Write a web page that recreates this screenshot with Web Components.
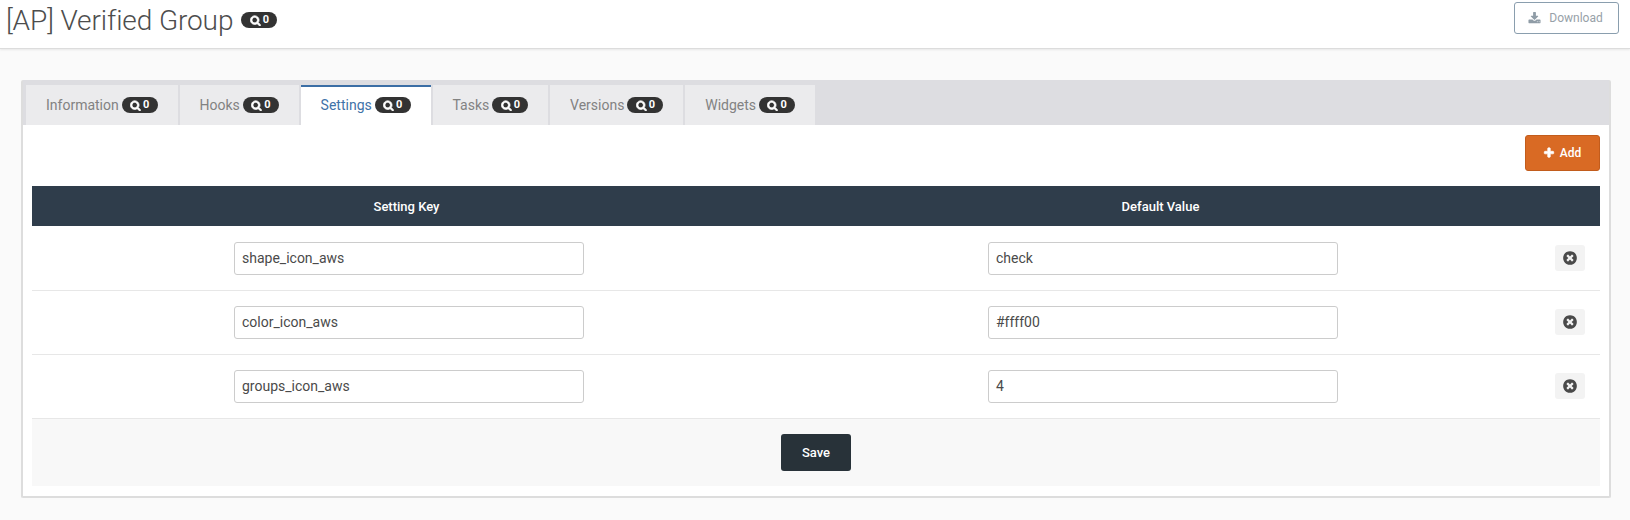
<!DOCTYPE html>
<html>
<head>
<meta charset="utf-8">
<title>[AP] Verified Group</title>
<style>
html, body { margin: 0; padding: 0; background: #fafafa; }
body { font-family: Roboto, "Liberation Sans", sans-serif; width: 1630px; height: 520px; overflow: hidden; }
</style>
</head>
<body>
<page-header heading="[AP] Verified Group"></page-header>
<settings-panel>
  <tab-strip>
    <tab-item>Information</tab-item>
    <tab-item>Hooks</tab-item>
    <tab-item active>Settings</tab-item>
    <tab-item>Tasks</tab-item>
    <tab-item>Versions</tab-item>
    <tab-item>Widgets</tab-item>
  </tab-strip>
  <settings-table>
    <setting-row key="shape_icon_aws" value="check"></setting-row>
    <setting-row key="color_icon_aws" value="#ffff00"></setting-row>
    <setting-row key="groups_icon_aws" value="4"></setting-row>
  </settings-table>
</settings-panel>

<script>
const ICONS = {
  search: "M1216 832q0-185-131.500-316.500t-316.500-131.500-316.500 131.500-131.500 316.500 131.500 316.500 316.500 131.500 316.500-131.500 131.500-316.500zm512 832q0 52-38 90t-90 38q-54 0-90-38l-343-342q-179 124-399 124-143 0-273.500-55.500t-225-150-150-225-55.500-273.500 55.500-273.500 150-225 225-150 273.500-55.500 273.500 55.500 225 150 150 225 55.500 273.500q0 220-124 399l343 343q37 37 37 90z",
  plus: "M1600 736v192q0 40-28 68t-68 28h-416v416q0 40-28 68t-68 28h-192q-40 0-68-28t-28-68v-416h-416q-40 0-68-28t-28-68v-192q0-40 28-68t68-28h416v-416q0-40 28-68t68-28h192q40 0 68 28t28 68v416h416q40 0 68 28t28 68z",
  close: "M1277 1122q0-26-19-45l-181-181 181-181q19-19 19-45 0-27-19-46l-90-90q-19-19-46-19-26 0-45 19l-181 181-181-181q-19-19-45-19-27 0-46 19l-90 90q-19 19-19 46 0 26 19 45l181 181-181 181q-19 19-19 45 0 27 19 46l90 90q19 19 46 19 26 0 45-19l181-181 181 181q19 19 45 19 27 0 46-19l90-90q19-19 19-46zm387-226q0 209-103 385.500t-279.500 279.500-385.500 103-385.500-103-279.500-279.500-103-385.500 103-385.500 279.500-279.500 385.500-103 385.500 103 279.500 279.500 103 385.500z",
  download: "M1344 1344q0-26-19-45t-45-19-45 19-19 45 19 45 45 19 45-19 19-45zm256 0q0-26-19-45t-45-19-45 19-19 45 19 45 45 19 45-19 19-45zm128-224v320q0 40-28 68t-68 28h-1472q-40 0-68-28t-28-68v-320q0-40 28-68t68-28h465l135 136q58 56 136 56t136-56l136-136h464q40 0 68 28t28 68zm-325-569q17 41-14 70l-448 448q-18 19-45 19t-45-19l-448-448q-31-29-14-70 17-39 59-39h256v-448q0-26 19-45t45-19h256q26 0 45 19t19 45v448h256q42 0 59 39z"
};
const icon = (name, size, bold = 0) =>
  `<svg width="${size}" height="${size}" viewBox="0 0 1792 1792" fill="currentColor" stroke="currentColor" stroke-width="${bold}" aria-hidden="true"><path d="${ICONS[name]}"></path></svg>`;

class CountBadge extends HTMLElement {
  constructor() {
    super();
    this.attachShadow({ mode: "open" });
    this.shadowRoot.innerHTML = `<style>
:host {
  display: inline-flex;
  align-items: center;
  justify-content: center;
  gap: 2px;
  width: 36px;
  height: 16px;
  border-radius: 8px;
  background: #333333;
  color: #ffffff;
  font-size: 11px;
  font-weight: 700;
  line-height: 16px;
}
svg { display: block; }
</style>${icon("search", 11, 130)}<span>0</span>`;
  }
}

class PageHeader extends HTMLElement {
  constructor() {
    super();
    this.attachShadow({ mode: "open" });
    this.shadowRoot.innerHTML = `<style>
:host {
  box-sizing: border-box;
  display: flex;
  justify-content: space-between;
  align-items: flex-start;
  height: 49px;
  padding: 2px 11px 0 6px;
  background: #ffffff;
  border-bottom: 1px solid #dcdcdc;
  box-shadow: 0 1px 2px rgba(0, 0, 0, 0.08);
}
.title { display: flex; align-items: center; gap: 8px; height: 36px; }
h1 { margin: 0; height: 36px; font-size: 28px; font-weight: 300; line-height: 38px; letter-spacing: -0.1px; color: #4d4d4d; }
button {
  box-sizing: border-box;
  display: flex;
  align-items: center;
  justify-content: center;
  gap: 8px;
  width: 105px;
  height: 32px;
  padding: 0 2px 0 0;
  background: #ffffff;
  border: 1px solid #8a9eae;
  border-radius: 3px;
  color: #97a1a8;
  font: 400 12px Roboto, sans-serif;
}
button svg { color: #8f9ca6; }
</style>
<div class="title"><h1></h1><count-badge></count-badge></div>
<button type="button">${icon("download", 13)}<span>Download</span></button>`;
    this.shadowRoot.querySelector("h1").textContent = this.getAttribute("heading");
  }
}

class SettingsPanel extends HTMLElement {
  constructor() {
    super();
    this.attachShadow({ mode: "open" });
    this.shadowRoot.innerHTML = `<style>
:host {
  box-sizing: border-box;
  display: block;
  width: 1590px;
  margin: 31px 0 0 21px;
  background: #ffffff;
  border: 2px solid #dddddd;
  border-top: 0;
  border-radius: 2px;
}
</style><slot></slot>`;
  }
}

class TabStrip extends HTMLElement {
  constructor() {
    super();
    this.attachShadow({ mode: "open" });
    this.shadowRoot.innerHTML = `<style>
:host {
  display: flex;
  gap: 1.8px;
  height: 45px;
  box-sizing: border-box;
  padding: 5px 0 0 3px;
  background: #dddde1;
}
</style><slot></slot>`;
  }
}

class TabItem extends HTMLElement {
  constructor() {
    super();
    this.attachShadow({ mode: "open" });
    this.shadowRoot.innerHTML = `<style>
:host {
  box-sizing: border-box;
  display: flex;
  align-items: center;
  gap: 3px;
  height: 40px;
  padding: 0 20px;
  background: #ebebed;
  color: #828282;
  font-size: 14px;
}
:host([active]) {
  background: #ffffff;
  color: #3f72a8;
  border-top: 2px solid #3b6ea5;
  padding-bottom: 2px;
}
</style><slot></slot><count-badge></count-badge>`;
  }
}

class SettingsTable extends HTMLElement {
  constructor() {
    super();
    this.attachShadow({ mode: "open" });
    this.shadowRoot.innerHTML = `<style>
:host { display: block; padding: 10px 9px 10px 9px; }
.tools { display: flex; justify-content: flex-end; margin-bottom: 15px; }
.add {
  box-sizing: border-box;
  display: flex;
  align-items: center;
  justify-content: center;
  gap: 5px;
  width: 75px;
  height: 36px;
  padding: 0 1px 0 0;
  background: #d96a24;
  border: 1px solid #c25c1c;
  border-radius: 3px;
  color: #ffffff;
  font: 500 12px Roboto, sans-serif;
}
.head {
  display: grid;
  grid-template-columns: 1fr 1fr 60px;
  height: 40px;
  align-items: center;
  background: #2f3d4b;
  color: #ffffff;
  font-size: 13px;
  font-weight: 500;
  text-align: center;
}
.head div { padding-right: 5px; }
.foot {
  display: flex;
  justify-content: center;
  align-items: flex-start;
  box-sizing: border-box;
  height: 67px;
  padding-top: 15px;
  background: #f8f8f8;
}
.save {
  width: 70px;
  height: 37px;
  padding: 0;
  background: #283239;
  border: 0;
  border-radius: 3px;
  color: #ffffff;
  font: 500 13px Roboto, sans-serif;
}
</style>
<div class="tools"><button class="add" type="button">${icon("plus", 12, 100)}<span>Add</span></button></div>
<div class="head"><div>Setting Key</div><div>Default Value</div><div></div></div>
<slot></slot>
<div class="foot"><button class="save" type="button">Save</button></div>`;
  }
}

class SettingRow extends HTMLElement {
  constructor() {
    super();
    this.attachShadow({ mode: "open" });
    this.shadowRoot.innerHTML = `<style>
:host {
  box-sizing: border-box;
  display: grid;
  grid-template-columns: 1fr 1fr 60px;
  align-items: center;
  justify-items: center;
  height: 64px;
  border-bottom: 1px solid #e7e7e7;
}
:host(:first-of-type) { height: 65px; padding-top: 1px; }
.field {
  box-sizing: border-box;
  width: 350px;
  height: 33px;
  padding: 0 7px;
  background: #ffffff;
  border: 1px solid #cccccc;
  border-radius: 3px;
  color: #4a4a4a;
  font-size: 14px;
  line-height: 31px;
}
.remove {
  display: flex;
  align-items: center;
  justify-content: center;
  width: 30px;
  height: 26px;
  margin-bottom: 1px;
  padding: 0;
  background: #f3f3f3;
  border: 0;
  border-radius: 3px;
  color: #4a4a4a;
}
</style>
<div class="field" role="textbox" id="key"></div>
<div class="field" role="textbox" id="value"></div>
<button class="remove" type="button" aria-label="Remove">${icon("close", 16)}</button>`;
    this.shadowRoot.getElementById("key").textContent = this.getAttribute("key");
    this.shadowRoot.getElementById("value").textContent = this.getAttribute("value");
  }
}

customElements.define("count-badge", CountBadge);
customElements.define("page-header", PageHeader);
customElements.define("settings-panel", SettingsPanel);
customElements.define("tab-strip", TabStrip);
customElements.define("tab-item", TabItem);
customElements.define("settings-table", SettingsTable);
customElements.define("setting-row", SettingRow);
</script>
</body>
</html>
